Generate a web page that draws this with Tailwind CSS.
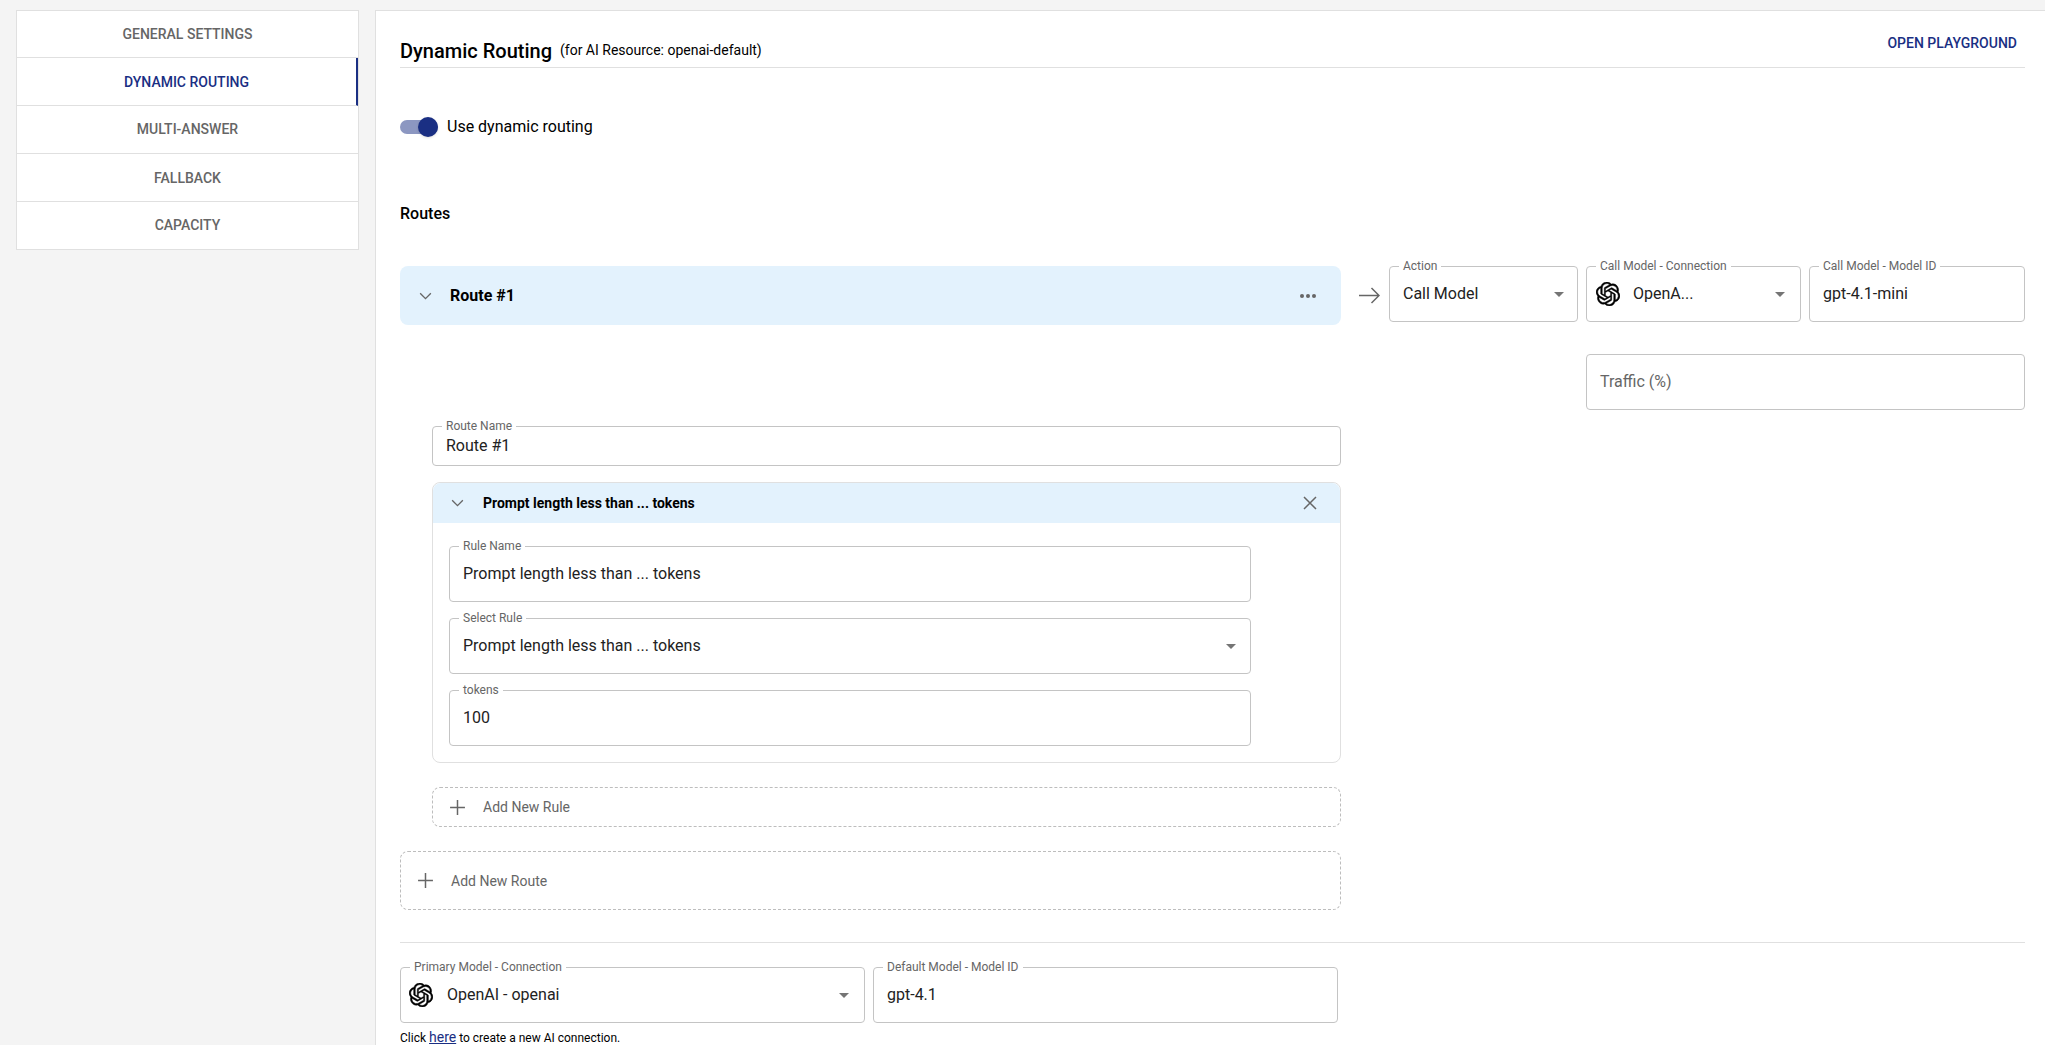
<!DOCTYPE html>
<html lang="en">
<head>
    <meta charset="UTF-8">
    <title>Dynamic Routing</title>
    <script src="https://cdn.jsdelivr.net/npm/@tailwindcss/browser@4"></script>
</head>
<body class="bg-[#f4f4f4] font-[Roboto,sans-serif] h-screen overflow-hidden">
    <svg class="hidden">
        <symbol id="openai" viewBox="0 0 24 24"><path d="M22.2819 9.8211a5.9847 5.9847 0 0 0-.5157-4.9108 6.0462 6.0462 0 0 0-6.5098-2.9A6.0651 6.0651 0 0 0 4.9807 4.1818a5.9847 5.9847 0 0 0-3.9977 2.9 6.0462 6.0462 0 0 0 .7427 7.0966 5.98 5.98 0 0 0 .511 4.9107 6.051 6.051 0 0 0 6.5146 2.9001A5.9847 5.9847 0 0 0 13.2599 24a6.0557 6.0557 0 0 0 5.7718-4.2058 5.9894 5.9894 0 0 0 3.9977-2.9001 6.0557 6.0557 0 0 0-.7475-7.0729zm-9.022 12.6081a4.4755 4.4755 0 0 1-2.8764-1.0408l.1419-.0804 4.7783-2.7582a.7948.7948 0 0 0 .3927-.6813v-6.7369l2.02 1.1686a.071.071 0 0 1 .038.052v5.5826a4.504 4.504 0 0 1-4.4945 4.4944zm-9.6607-4.1254a4.4708 4.4708 0 0 1-.5346-3.0137l.142.0852 4.783 2.7582a.7712.7712 0 0 0 .7806 0l5.8428-3.3685v2.3324a.0804.0804 0 0 1-.0332.0615L9.74 19.9502a4.4992 4.4992 0 0 1-6.1408-1.6464zM2.3408 7.8956a4.485 4.485 0 0 1 2.3655-1.9728V11.6a.7664.7664 0 0 0 .3879.6765l5.8144 3.3543-2.0201 1.1685a.0757.0757 0 0 1-.071 0l-4.8303-2.7865A4.504 4.504 0 0 1 2.3408 7.872zm16.5963 3.8558L13.1038 8.364 15.1192 7.2a.0757.0757 0 0 1 .071 0l4.8303 2.7913a4.4944 4.4944 0 0 1-.6765 8.1042v-5.6772a.79.79 0 0 0-.407-.667zm2.0107-3.0231l-.142-.0852-4.7735-2.7818a.7759.7759 0 0 0-.7854 0L9.409 9.2297V6.8974a.0662.0662 0 0 1 .0284-.0615l4.8303-2.7866a4.4992 4.4992 0 0 1 6.6802 4.66zM8.3065 12.863l-2.02-1.1638a.0804.0804 0 0 1-.038-.0567V6.0742a4.4992 4.4992 0 0 1 7.3757-3.4537l-.142.0805L8.704 5.459a.7948.7948 0 0 0-.3927.6813zm1.0976-2.3654l2.602-1.4998 2.6069 1.4998v2.9994l-2.5974 1.4997-2.6067-1.4997Z"/></symbol>
        <symbol id="caret" viewBox="0 0 10 5"><path d="M0 0h10L5 5z"/></symbol>
        <symbol id="chev" viewBox="0 0 14 9"><path d="M1 1.5l6 6 6-6" fill="none" stroke="currentColor" stroke-width="1.5"/></symbol>
        <symbol id="plus" viewBox="0 0 16 16"><path d="M8 1v14M1 8h14" fill="none" stroke="currentColor" stroke-width="1.4"/></symbol>
    </svg>

    <div class="flex pt-[10px] pl-4 gap-4 h-full">
        <!-- Sidebar -->
        <div class="w-[343px] shrink-0 self-start bg-white border border-[#e0e0e0] text-sm font-medium text-[#666] text-center">
            <div class="h-[47px] flex items-center justify-center border-b border-[#e0e0e0]">GENERAL SETTINGS</div>
            <div class="h-12 flex items-center justify-center border-b border-[#e0e0e0] border-r-2 border-r-[#1a2f83] text-[#1a2f83]">DYNAMIC ROUTING</div>
            <div class="h-12 flex items-center justify-center border-b border-[#e0e0e0] pb-[2px]">MULTI-ANSWER</div>
            <div class="h-12 flex items-center justify-center border-b border-[#e0e0e0]">FALLBACK</div>
            <div class="h-[47px] flex items-center justify-center pb-[2px]">CAPACITY</div>
        </div>

        <!-- Main -->
        <div class="flex-1 bg-white border-l border-t border-[#e0e0e0] pl-6 pr-5">
            <div class="h-[57px] flex items-end justify-between border-b border-[#e0e0e0] pb-[2px]">
                <div class="flex items-center gap-2">
                    <h1 class="text-xl font-medium text-black leading-7">Dynamic Routing</h1>
                    <span class="text-sm text-black mb-[2px]">(for AI Resource: openai-default)</span>
                </div>
                <span class="text-sm font-medium text-[#1a2f83] pr-2 mb-[12px]">OPEN PLAYGROUND</span>
            </div>

            <!-- Toggle -->
            <div class="flex items-center mt-[47px] h-6">
                <div class="relative w-[38px] h-[14px] rounded-full bg-[#8c97c1]">
                    <div class="absolute right-0 -top-[3px] w-5 h-5 rounded-full bg-[#1a2f83] shadow"></div>
                </div>
                <span class="ml-[9px] text-base text-black">Use dynamic routing</span>
            </div>

            <div class="mt-[63px] text-base font-medium text-black leading-6">Routes</div>

            <!-- Route row -->
            <div class="flex mt-[40px]">
                <div class="w-[941px] h-[59px] shrink-0 bg-[#e3f2fd] rounded-lg flex items-center pl-[19px] pr-[25px]">
                    <svg class="w-[13px] h-2 text-[#666]"><use href="#chev"/></svg>
                    <span class="ml-[18px] text-base font-bold text-black flex-1">Route #1</span>
                    <span class="flex gap-[2px]">
                        <i class="w-1 h-1 rounded-full bg-[#666]"></i><i class="w-1 h-1 rounded-full bg-[#666]"></i><i class="w-1 h-1 rounded-full bg-[#666]"></i>
                    </span>
                </div>
                <div class="w-[48px] h-[59px] shrink-0 flex items-center justify-center pl-2">
                    <svg class="w-[21px] h-[17px] text-[#666]" viewBox="0 0 21 17"><path d="M0 8.5h20M12.5 1l7.5 7.5-7.5 7.5" fill="none" stroke="currentColor" stroke-width="1.5"/></svg>
                </div>
                <div class="relative w-[189px] h-[56px] shrink-0 border border-[#c4c4c4] rounded flex items-center pl-[13px] pr-[13px] justify-between">
                    <span class="absolute -top-2 left-[9px] bg-white px-1 text-xs text-[#666] leading-[14px]">Action</span>
                    <span class="text-base text-[#222]">Call Model</span>
                    <svg class="w-[10px] h-[5px] text-[#757575] fill-current"><use href="#caret"/></svg>
                </div>
                <div class="relative w-[215px] h-[56px] shrink-0 ml-[8px] border border-[#c4c4c4] rounded flex items-center pl-[9px] pr-[15px]">
                    <span class="absolute -top-2 left-[9px] bg-white px-1 text-xs text-[#666] leading-[14px]">Call Model - Connection</span>
                    <svg class="w-6 h-6 fill-black stroke-black stroke-[0.5]"><use href="#openai"/></svg>
                    <span class="ml-[13px] text-base text-[#222] flex-1">OpenA...</span>
                    <svg class="w-[10px] h-[5px] text-[#757575] fill-current"><use href="#caret"/></svg>
                </div>
                <div class="relative flex-1 h-[56px] ml-[8px] border border-[#c4c4c4] rounded flex items-center pl-[13px]">
                    <span class="absolute -top-2 left-[9px] bg-white px-1 text-xs text-[#666] leading-[14px]">Call Model - Model ID</span>
                    <span class="text-base text-[#222]">gpt-4.1-mini</span>
                </div>
            </div>

            <!-- Traffic -->
            <div class="flex justify-end mt-[29px]">
                <div class="w-[439px] h-[56px] border border-[#c4c4c4] rounded flex items-center pl-[13px] text-base text-[#666]">Traffic (%)</div>
            </div>

            <!-- Route details -->
            <div class="w-[941px] pl-[32px] mt-4">
                <div class="relative h-[40px] border border-[#c4c4c4] rounded flex items-center pl-[13px]">
                    <span class="absolute -top-2 left-[9px] bg-white px-1 text-xs text-[#666] leading-[14px]">Route Name</span>
                    <span class="text-base text-[#222]">Route #1</span>
                </div>

                <div class="mt-4 h-[281px] border border-[#e0e0e0] rounded-lg">
                    <div class="h-[40px] bg-[#e3f2fd] rounded-t-lg flex items-center pl-[18px] pr-[23px]">
                        <svg class="w-[13px] h-2 text-[#666]"><use href="#chev"/></svg>
                        <span class="ml-[19px] text-sm font-bold text-black flex-1">Prompt length less than ... tokens</span>
                        <svg class="w-[14px] h-[14px] text-[#666]" viewBox="0 0 14 14"><path d="M1 1l12 12M13 1L1 13" fill="none" stroke="currentColor" stroke-width="1.5"/></svg>
                    </div>
                    <div class="pl-4 pt-[23px] w-[818px] flex flex-col gap-4">
                        <div class="relative h-[56px] border border-[#c4c4c4] rounded flex items-center pl-[13px]">
                            <span class="absolute -top-2 left-[9px] bg-white px-1 text-xs text-[#666] leading-[14px]">Rule Name</span>
                            <span class="text-base text-[#222]">Prompt length less than ... tokens</span>
                        </div>
                        <div class="relative h-[56px] border border-[#c4c4c4] rounded flex items-center justify-between pl-[13px] pr-[14px]">
                            <span class="absolute -top-2 left-[9px] bg-white px-1 text-xs text-[#666] leading-[14px]">Select Rule</span>
                            <span class="text-base text-[#222]">Prompt length less than ... tokens</span>
                            <svg class="w-[10px] h-[5px] text-[#757575] fill-current"><use href="#caret"/></svg>
                        </div>
                        <div class="relative h-[56px] border border-[#c4c4c4] rounded flex items-center pl-[13px]">
                            <span class="absolute -top-2 left-[9px] bg-white px-1 text-xs text-[#666] leading-[14px]">tokens</span>
                            <span class="text-base text-[#222]">100</span>
                        </div>
                    </div>
                </div>

                <div class="mt-6 h-10 border border-dashed border-[#bdbdbd] rounded-lg flex items-center pl-4 text-sm text-[#666]">
                    <svg class="w-[17px] h-[17px] text-[#666]"><use href="#plus"/></svg>
                    <span class="ml-[17px]">Add New Rule</span>
                </div>
            </div>

            <div class="w-[941px] mt-6 h-[59px] border border-dashed border-[#bdbdbd] rounded-lg flex items-center pl-4 text-sm text-[#666]">
                <svg class="w-[17px] h-[17px] text-[#666]"><use href="#plus"/></svg>
                <span class="ml-[17px]">Add New Route</span>
            </div>

            <div class="mt-8 border-t border-[#e0e0e0]"></div>

            <!-- Primary model -->
            <div class="flex gap-2 mt-6">
                <div class="relative w-[465px] h-[56px] border border-[#c4c4c4] rounded flex items-center pl-2 pr-[15px]">
                    <span class="absolute -top-2 left-[9px] bg-white px-1 text-xs text-[#666] leading-[14px]">Primary Model - Connection</span>
                    <svg class="w-6 h-6 fill-black stroke-black stroke-[0.5]"><use href="#openai"/></svg>
                    <span class="ml-[14px] text-base text-[#222] flex-1">OpenAI - openai</span>
                    <svg class="w-[10px] h-[5px] text-[#757575] fill-current"><use href="#caret"/></svg>
                </div>
                <div class="relative w-[465px] h-[56px] border border-[#c4c4c4] rounded flex items-center pl-[13px]">
                    <span class="absolute -top-2 left-[9px] bg-white px-1 text-xs text-[#666] leading-[14px]">Default Model - Model ID</span>
                    <span class="text-base text-[#222]">gpt-4.1</span>
                </div>
            </div>
            <p class="mt-1 text-xs text-black">Click <a class="text-sm text-[#1a2f83] underline">here</a> to create a new AI connection.</p>
        </div>
    </div>
</body>
</html>
